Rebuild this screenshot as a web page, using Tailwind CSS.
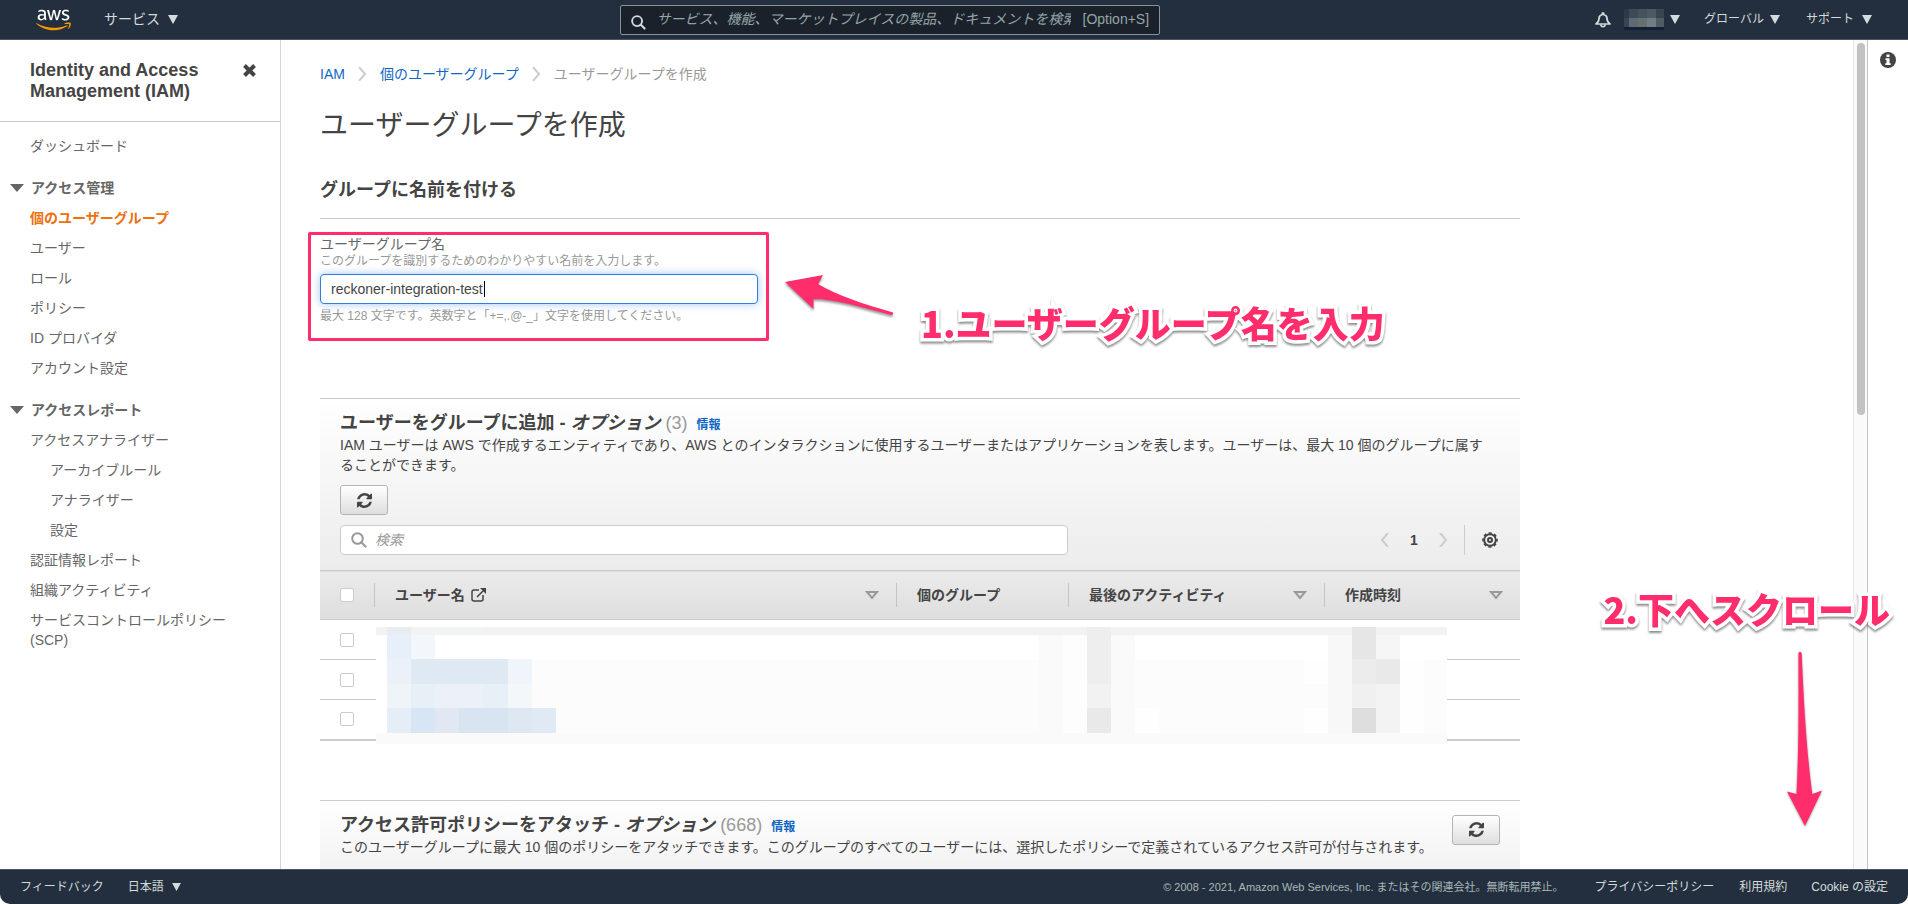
<!DOCTYPE html>
<html lang="ja">
<head>
<meta charset="utf-8">
<title>IAM</title>
<script src="https://cdn.jsdelivr.net/npm/@tailwindcss/browser@4"></script>
</head>
<body class="bg-white text-sm leading-5 text-[#444] font-['Liberation_Sans','Noto_Sans_CJK_JP',sans-serif]">
<svg class="hidden">
  <symbol id="refresh" viewBox="0 0 1536 1536"><path fill="currentColor" d="M1511 928q0 5-1 7-64 268-268 434.500T764 1536q-146 0-282.500-55T238 1324l-129 129q-19 19-45 19t-45-19-19-45V960q0-26 19-45t45-19h448q26 0 45 19t19 45-19 45l-137 137q71 66 161 102t187 36q134 0 250-65t186-179q11-17 53-117 8-23 30-23h192q13 0 22.500 9.500t9.500 22.500zm25-800v448q0 26-19 45t-45 19h-448q-26 0-45-19t-19-45 19-45l138-138Q969 256 768 256q-134 0-250 65T332 500q-11 17-53 117-8 23-30 23H50q-13 0-22.500-9.500T18 608v-7q65-268 270-434.500T768 0q146 0 284 55.500T1297 212l130-129q19-19 45-19t45 19 19 45z"/></symbol>
  <symbol id="down" viewBox="0 0 10 9"><path fill="currentColor" d="M0 0h10L5 9z"/></symbol>
  <symbol id="sort" viewBox="0 0 14 9"><path fill="none" stroke="#999" stroke-width="2" d="M2 1h10L7 7z"/></symbol>
  <symbol id="chev" viewBox="0 0 9 14"><path fill="none" stroke="#ccc" stroke-width="2" d="M1 0l6 7-6 7"/></symbol>
  <symbol id="glass" viewBox="0 0 16 16"><circle cx="6.500" cy="6.500" r="5.300" fill="none" stroke="currentColor" stroke-width="2"/><path stroke="currentColor" stroke-width="2.200" stroke-linecap="round" d="M10.500 10.500l4 4"/></symbol>
</svg>
<div class="relative flex h-screen flex-col overflow-hidden">

<header class="flex h-10 shrink-0 items-center border-b border-[#4b5563] bg-[#232f3e] pr-9 pl-9 text-[#d5dbdb]">
  <a href="#" aria-label="AWS" class="block">
    <svg class="h-[22px] w-[35px]" viewBox="0 0 304 182"><path fill="#fff" d="M86.400 66.400c0 3.700.4 6.700 1.100 8.900.8 2.200 1.800 4.600 3.200 7.200.5.800.7 1.600.7 2.300 0 1-.6 2-1.900 3l-6.300 4.200c-.9.600-1.800.9-2.600.9-1 0-2-.5-3-1.400-1.400-1.500-2.600-3.100-3.600-4.700-1-1.700-2-3.600-3.100-5.900-7.800 9.200-17.600 13.800-29.400 13.800-8.400 0-15.100-2.400-20-7.200-4.900-4.800-7.400-11.200-7.400-19.200 0-8.500 3-15.400 9.100-20.600 6.100-5.200 14.200-7.800 24.500-7.800 3.400 0 6.900.3 10.600.8 3.700.5 7.500 1.300 11.500 2.200v-7.300c0-7.600-1.600-12.900-4.700-16-3.200-3.100-8.600-4.600-16.300-4.600-3.500 0-7.100.4-10.800 1.300-3.700.9-7.300 2-10.800 3.400-1.600.7-2.800 1.100-3.500 1.300-.7.200-1.200.3-1.600.3-1.400 0-2.100-1-2.100-3.100v-4.900c0-1.600.2-2.800.7-3.500.5-.7 1.400-1.400 2.800-2.100 3.500-1.800 7.700-3.300 12.600-4.500 4.900-1.300 10.100-1.900 15.600-1.900 11.900 0 20.600 2.700 26.200 8.100 5.500 5.400 8.300 13.600 8.300 24.600v32.400zM45.800 81.600c3.300 0 6.700-.6 10.300-1.800 3.600-1.200 6.800-3.400 9.500-6.400 1.600-1.900 2.800-4 3.400-6.400.6-2.400 1-5.300 1-8.700v-4.200c-2.900-.7-6-1.300-9.200-1.700-3.200-.4-6.300-.6-9.400-.6-6.700 0-11.600 1.300-14.900 4-3.300 2.700-4.900 6.500-4.900 11.500 0 4.700 1.200 8.200 3.700 10.600 2.400 2.500 5.900 3.700 10.500 3.700zm80.300 10.800c-1.800 0-3-.3-3.800-1-.8-.6-1.500-2-2.100-3.900L96.700 10.200c-.6-2-.9-3.300-.9-4 0-1.600.8-2.500 2.400-2.500h9.800c1.900 0 3.200.3 3.900 1 .8.600 1.400 2 2 3.900l16.800 66.200 15.600-66.200c.5-2 1.100-3.300 1.900-3.900.8-.6 2.200-1 4-1h8c1.900 0 3.200.3 4 1 .8.600 1.500 2 1.900 3.900l15.800 67 17.300-67c.6-2 1.300-3.300 2-3.900.8-.6 2.100-1 3.900-1h9.300c1.600 0 2.500.8 2.500 2.500 0 .5-.1 1-.2 1.600-.1.600-.3 1.400-.7 2.500l-24.100 77.300c-.6 2-1.300 3.300-2.100 3.900-.8.600-2.100 1-3.800 1h-8.600c-1.900 0-3.200-.3-4-1-.8-.7-1.500-2-1.900-4L156 23l-15.400 64.400c-.5 2-1.100 3.300-1.900 4-.8.700-2.200 1-4 1zm128.500 2.700c-5.200 0-10.400-.6-15.400-1.800-5-1.200-8.900-2.500-11.500-4-1.600-.9-2.700-1.900-3.100-2.800-.4-.9-.6-1.900-.6-2.800v-5.100c0-2.100.8-3.100 2.300-3.100.6 0 1.200.1 1.800.3.600.2 1.500.6 2.500 1 3.400 1.500 7.100 2.700 11 3.500 4 .8 7.900 1.200 11.900 1.200 6.300 0 11.200-1.100 14.600-3.300 3.400-2.200 5.200-5.400 5.200-9.500 0-2.800-.9-5.100-2.700-7-1.800-1.900-5.200-3.600-10.100-5.200L246 52c-7.300-2.300-12.700-5.700-16-10.200-3.300-4.400-5-9.300-5-14.500 0-4.200.9-7.900 2.700-11.100 1.800-3.200 4.200-6 7.200-8.200 3-2.300 6.400-4 10.400-5.200 4-1.200 8.200-1.700 12.600-1.700 2.200 0 4.500.1 6.700.4 2.300.3 4.400.7 6.500 1.100 2 .5 3.900 1 5.700 1.600 1.800.6 3.200 1.200 4.200 1.800 1.400.8 2.400 1.600 3 2.500.6.800.9 1.900.9 3.300v4.700c0 2.100-.8 3.200-2.300 3.200-.8 0-2.100-.4-3.800-1.200-5.700-2.600-12.100-3.900-19.200-3.900-5.700 0-10.200.9-13.300 2.800-3.100 1.900-4.700 4.800-4.700 8.900 0 2.800 1 5.200 3 7.100 2 1.900 5.700 3.800 11 5.500l14.200 4.500c7.200 2.300 12.400 5.500 15.500 9.600 3.100 4.100 4.600 8.800 4.600 14 0 4.300-.9 8.200-2.600 11.600-1.800 3.400-4.200 6.400-7.300 8.800-3.100 2.500-6.800 4.300-11.100 5.600-4.500 1.400-9.200 2.100-14.300 2.100z"/><path fill="#f90" d="M273.500 143.700c-32.900 24.300-80.700 37.200-121.800 37.200-57.600 0-109.500-21.300-148.700-56.700-3.100-2.800-.3-6.600 3.400-4.400 42.400 24.600 94.700 39.500 148.800 39.500 36.500 0 76.600-7.600 113.500-23.200 5.500-2.500 10.200 3.600 4.800 7.600z"/><path fill="#f90" d="M287.200 128.100c-4.200-5.400-27.800-2.600-38.500-1.300-3.200.4-3.700-2.400-.8-4.500 18.800-13.200 49.700-9.400 53.300-5 3.600 4.500-1 35.400-18.600 50.200-2.700 2.300-5.300 1.100-4.100-1.900 4-9.900 12.900-32.200 8.700-37.500z"/></svg>
  </a>
  <button class="ml-[33px] flex items-center gap-2 pb-px">サービス<svg class="h-[9px] w-[10px]"><use href="#down"/></svg></button>
  <div class="flex flex-1 justify-center">
    <div class="ml-[6px] flex h-[30px] w-[540px] items-center rounded-xs border border-[#879596] bg-[#1a212b]">
      <svg class="mt-[6px] ml-[10px] h-[15px] w-[15px]"><use href="#glass"/></svg>
      <input aria-label="検索" placeholder="サービス、機能、マーケットプレイスの製品、ドキュメントを検索" class="ml-[11px] w-[414px] pb-px italic outline-none placeholder:text-[#95a5a6]">
      <span class="ml-3 pb-px text-[#95a5a6]">[Option+S]</span>
    </div>
  </div>
  <button aria-label="通知"><svg class="h-4 w-4" viewBox="0 0 16 16" fill="none" stroke="#d5dbdb" stroke-width="1.700"><path stroke-linejoin="round" d="M1 12h14c-2-1.500-3-3-3-5.500C12 4 10.500 3 8.700 2.500V1.200H7.300v1.300C5.500 3 4 4 4 6.500 4 9 3 10.500 1 12z"/><path d="M5.800 12.500c.2 3 4.200 3 4.400 0"/></svg></button>
  <button aria-label="アカウント" class="ml-[13px] flex items-center gap-[6px]">
    <svg class="h-[21px] w-10" viewBox="0 0 40 21" shape-rendering="crispEdges"><path fill="#2e3947" d="M0 0h14v9H0z"/><path fill="#3d4956" d="M5 0h9v9H5z"/><path fill="#46525e" d="M14 0h9v9h-9z"/><path fill="#4d5963" d="M23 0h9v9h-9z"/><path fill="#384451" d="M32 0h8v9h-8zM0 9h5v9H0z"/><path fill="#5e6972" d="M5 9h9v9H5z"/><path fill="#65706f" d="M14 9h9v9h-9z"/><path fill="#717d84" d="M23 9h9v9h-9z"/><path fill="#505c65" d="M32 9h8v9h-8z"/><path fill="#132036" d="M0 18h40v3H0z"/></svg>
    <svg class="h-[9px] w-[10px]"><use href="#down"/></svg>
  </button>
  <button class="ml-6 flex items-center gap-[6px] pb-px text-xs">グローバル<svg class="h-[9px] w-[10px]"><use href="#down"/></svg></button>
  <button class="ml-[26px] flex items-center gap-2 pb-px text-xs">サポート<svg class="h-[9px] w-[10px]"><use href="#down"/></svg></button>
</header>

<div class="flex min-h-0 flex-1">
  <aside class="w-[281px] shrink-0 border-r border-[#d5d5d5] text-[#666]">
    <div class="flex h-[82px] items-start justify-between border-b border-[#ccc] pt-5 pr-6 pl-[30px]">
      <h2 class="w-[180px] text-lg leading-[21px] font-bold text-[#444]">Identity and Access Management (IAM)</h2>
      <button aria-label="閉じる" class="mt-1"><svg class="h-[13px] w-[13px]" viewBox="0 0 13 13"><path stroke="#444" stroke-width="4" d="M1.500 1.500l10 10M11.500 1.500l-10 10"/></svg></button>
    </div>
    <nav class="flex flex-col gap-[22px] pt-[14px] pr-8 pl-[30px]">
      <a href="#">ダッシュボード</a>
      <div>
        <button class="-ml-5 flex items-center gap-[7px] font-bold"><svg class="h-2 w-[14px]" viewBox="0 0 14 8"><path fill="#666" d="M0 0h14L7 8z"/></svg>アクセス管理</button>
        <ul class="mt-[10px] flex flex-col gap-[10px]">
          <li><a href="#" class="font-bold text-[#ec7211]">個のユーザーグループ</a></li>
          <li><a href="#">ユーザー</a></li>
          <li><a href="#">ロール</a></li>
          <li><a href="#">ポリシー</a></li>
          <li><a href="#">ID プロバイダ</a></li>
          <li><a href="#">アカウント設定</a></li>
        </ul>
      </div>
      <div>
        <button class="-ml-5 flex items-center gap-[7px] font-bold"><svg class="h-2 w-[14px]" viewBox="0 0 14 8"><path fill="#666" d="M0 0h14L7 8z"/></svg>アクセスレポート</button>
        <ul class="mt-[10px] flex flex-col gap-[10px]">
          <li><a href="#">アクセスアナライザー</a></li>
          <li class="pl-5"><a href="#">アーカイブルール</a></li>
          <li class="pl-5"><a href="#">アナライザー</a></li>
          <li class="pl-5"><a href="#">設定</a></li>
          <li><a href="#">認証情報レポート</a></li>
          <li><a href="#">組織アクティビティ</a></li>
          <li><a href="#">サービスコントロールポリシー (SCP)</a></li>
        </ul>
      </div>
    </nav>
  </aside>

  <main class="min-w-0 flex-1 overflow-hidden pt-6 pr-8 pl-[39px]">
    <div class="max-w-[1200px]">
      <nav class="flex items-center gap-[13px] text-[#999]">
        <a href="#" class="text-[#0f66c3]">IAM</a>
        <svg class="h-[14px] w-[9px]"><use href="#chev"/></svg>
        <a href="#" class="text-[#0f66c3]">個のユーザーグループ</a>
        <svg class="h-[14px] w-[9px]"><use href="#chev"/></svg>
        <span>ユーザーグループを作成</span>
      </nav>
      <h1 class="mt-[22px] text-[28px] leading-10">ユーザーグループを作成</h1>
      <h2 class="mt-8 border-b border-[#ccc] pb-4 text-lg leading-6 font-bold">グループに名前を付ける</h2>

      <div class="relative pt-4">
        <label for="gname" class="block leading-[18px] text-[#666]">ユーザーグループ名</label>
        <p class="text-xs leading-4 text-[#999]">このグループを識別するためのわかりやすい名前を入力します。</p>
        <div class="relative mt-[5px] w-[438px]">
          <input id="gname" value="reckoner-integration-test" class="block h-[30px] w-full rounded-[4px] border border-[#2e7fdb] bg-white px-[10px] text-[#444] shadow-[0_0_8px_rgba(46,127,219,0.45)] outline-none">
          <span class="absolute top-[7px] left-[164px] h-4 w-px bg-black"></span>
        </div>
        <p class="mt-1 text-xs leading-4 text-[#999]">最大 128 文字です。英数字と「+=,.@-_」文字を使用してください。</p>
        <div class="pointer-events-none absolute top-[13px] -left-3 h-[109px] w-[461px] rounded-xs border-3 border-[#ff2d6b] shadow-[0_0_1px_rgba(0,0,0,0.3)]"></div>
        <svg class="absolute top-[50px] left-[460px] h-[54px] w-[122px] drop-shadow-[0_2px_1px_rgba(0,0,0,0.4)]" viewBox="0 0 122 54"><path fill="#ff2d6b" d="M5 13L43 6l-5 9c20 12 46 20 75 28.500.8 1-.5 2.500-2 2.500-30-8-56-16-77.500-16V40z"/></svg>
        <p class="absolute top-[79px] left-[601px] font-['Noto_Sans_CJK_JP',sans-serif] text-4xl leading-12 font-black whitespace-nowrap text-[#ff2d6b] drop-shadow-[0_2px_1px_rgba(0,0,0,0.45)] [-webkit-text-stroke:7px_white] [paint-order:stroke_fill]">1.ユーザーグループ名を入力</p>
      </div>

      <section class="relative mt-[74px] border-t border-[#ccc]">
        <div class="bg-linear-to-b from-white to-[#ececec] px-5 pt-[13px] pb-[15px]">
          <h2 class="text-lg leading-[23px] font-bold">ユーザーをグループに追加 - <em>オプション</em> <span class="font-normal text-[#999]">(3)</span> <a href="#" class="ml-1 text-xs text-[#0f66c3]">情報</a></h2>
          <p class="pr-3">IAM ユーザーは AWS で作成するエンティティであり、AWS とのインタラクションに使用するユーザーまたはアプリケーションを表します。ユーザーは、最大 10 個のグループに属することができます。</p>
          <button aria-label="更新" class="mt-[10px] flex h-[30px] w-12 items-center justify-center rounded-[3px] border border-[#b5b5b5] bg-linear-to-b from-white to-[#dedede]"><svg class="h-[15px] w-[15px]"><use href="#refresh"/></svg></button>
          <div class="mt-[10px] flex items-center">
            <div class="flex h-[30px] w-[728px] items-center rounded-[4px] border border-[#ccc] bg-white pl-[10px]">
              <svg class="h-4 w-4 text-[#999]"><use href="#glass"/></svg>
              <input aria-label="ユーザー検索" placeholder="検索" class="ml-2 flex-1 italic outline-none placeholder:text-[#999]">
            </div>
            <button aria-label="前へ" class="ml-auto"><svg class="h-[14px] w-[9px] rotate-180"><use href="#chev"/></svg></button>
            <span class="w-[50px] text-center font-bold">1</span>
            <button aria-label="次へ"><svg class="h-[14px] w-[9px]"><use href="#chev"/></svg></button>
            <span class="ml-4 h-[30px] w-px bg-[#ccc]"></span>
            <button aria-label="設定" class="mr-[2px] ml-[17px]"><svg class="h-4 w-4" viewBox="0 0 16 16" fill="none" stroke="#444"><circle cx="8" cy="8" r="5.800" stroke-width="1.900"/><circle cx="8" cy="8" r="7" stroke-width="1.700" stroke-dasharray="3 2.500" stroke-dashoffset="1.500"/><circle cx="8" cy="8" r="2" stroke-width="2"/></svg></button>
          </div>
        </div>
        <table class="w-full table-fixed border-collapse text-left">
          <colgroup><col class="w-[54px]"><col><col class="w-[172px]"><col class="w-[256px]"><col class="w-[196px]"></colgroup>
          <thead>
            <tr class="h-[49px] border-y border-[#ccc] bg-linear-to-b from-[#ebebeb] to-[#dedede]">
              <th class="pl-5"><input type="checkbox" aria-label="すべて選択" class="block h-[14px] w-[14px] appearance-none rounded-[2px] border border-[#ccc] bg-white"></th>
              <th><div class="flex h-6 items-center gap-[6px] border-l border-[#c4c4c4] pr-[17px] pl-5">ユーザー名<svg class="h-[14px] w-[15px]" viewBox="0 0 15 14" fill="none" stroke="#444" stroke-width="1.500"><path d="M8 2H3a2 2 0 0 0-2 2v7a2 2 0 0 0 2 2h7a2 2 0 0 0 2-2V7M6 9l7-7"/><path stroke="none" fill="#444" d="M9 0h6v6z"/></svg><svg class="ml-auto h-[9px] w-[14px]"><use href="#sort"/></svg></div></th>
              <th><div class="flex h-6 items-center border-l border-[#c4c4c4] pl-5">個のグループ</div></th>
              <th><div class="flex h-6 items-center border-l border-[#c4c4c4] pr-[17px] pl-5">最後のアクティビティ<svg class="ml-auto h-[9px] w-[14px]"><use href="#sort"/></svg></div></th>
              <th><div class="flex h-6 items-center border-l border-[#c4c4c4] pr-[17px] pl-5">作成時刻<svg class="ml-auto h-[9px] w-[14px]"><use href="#sort"/></svg></div></th>
            </tr>
          </thead>
          <tbody>
            <tr class="h-10 border-b border-[#ccc]"><td class="pl-5"><input type="checkbox" aria-label="ユーザー 1" class="block h-[14px] w-[14px] appearance-none rounded-[2px] border border-[#ccc] bg-white"></td><td colspan="4"></td></tr>
            <tr class="h-10 border-b border-[#ccc]"><td class="pl-5"><input type="checkbox" aria-label="ユーザー 2" class="block h-[14px] w-[14px] appearance-none rounded-[2px] border border-[#ccc] bg-white"></td><td colspan="4"></td></tr>
            <tr class="h-10 border-b-2 border-[#ccc]"><td class="pl-5"><input type="checkbox" aria-label="ユーザー 3" class="block h-[14px] w-[14px] appearance-none rounded-[2px] border border-[#ccc] bg-white"></td><td colspan="4"></td></tr>
          </tbody>
        </table>
        <svg class="absolute top-[228px] left-14 h-[117px] w-[1071px]" viewBox="0 0 1071 117" shape-rendering="crispEdges">
          <path fill="#fff" d="M0 0h1071v117H0z"/><path fill="#fcfcfc" d="M156 33h915v73H156z"/><path fill="#fafafa" d="M0 106h1071v11H0z"/><path fill="#f2f2f2" d="M0 0h1071v8H0z"/>
          <path fill="#e9ecf0" d="M11 0h24v8H11z"/><path fill="#e6effa" d="M11 8h24v24H11z"/><path fill="#f3f7fb" d="M35 8h24v24H35z"/><path fill="#f2f4f4" d="M35 0h72v8H35z"/>
          <path fill="#ebf0f9" d="M11 32h24v25H11z"/><path fill="#dfe9f3" d="M35 32h97v25H35z"/><path fill="#eff5fa" d="M132 32h24v25h-24z"/>
          <path fill="#eff4f9" d="M11 57h24v24H11z"/><path fill="#e8f0f7" d="M35 57h24v24H35z"/><path fill="#ecf0f9" d="M59 57h48v24H59z"/><path fill="#e8f0f7" d="M107 57h25v24h-25z"/><path fill="#f3f7fa" d="M132 57h24v24h-24z"/>
          <path fill="#e5eef6" d="M11 81h24v25H11z"/><path fill="#d8e5f4" d="M35 81h24v25H35z"/><path fill="#e1e8f4" d="M59 81h24v25H59z"/><path fill="#d8e4f0" d="M83 81h49v25H83z"/><path fill="#dde8f2" d="M132 81h24v25h-24z"/><path fill="#dfeaf5" d="M156 81h24v25h-24z"/>
          <path fill="#fafafa" d="M663 8h24v98h-24z"/><path fill="#fdfdfd" d="M687 8h24v98h-24z"/><path fill="#eee" d="M711 0h24v57h-24z"/><path fill="#f2f2f2" d="M711 57h24v24h-24z"/><path fill="#e9e9e9" d="M711 81h24v25h-24z"/><path fill="#fafafa" d="M735 8h24v98h-24z"/><path fill="#fefefe" d="M759 81h24v25h-24zM928 32h24v25h-24zM928 81h24v25h-24z"/>
          <path fill="#f8f8f8" d="M952 8h24v98h-24z"/><path fill="#e6e6e6" d="M976 0h24v32h-24z"/><path fill="#ececec" d="M976 32h24v25h-24z"/><path fill="#f0f0f0" d="M976 57h24v24h-24z"/><path fill="#dedede" d="M976 81h24v25h-24z"/><path fill="#f6f6f6" d="M1000 8h24v24h-24z"/><path fill="#e9e9e9" d="M1000 32h24v25h-24z"/><path fill="#f3f3f3" d="M1000 57h24v49h-24z"/><path fill="#fefefe" d="M1024 32h24v74h-24z"/>
        </svg>
      </section>

      <section class="mt-[59px] flex items-start border-t border-[#ccc] bg-linear-to-b from-white to-[#e6e6e6] px-5 pt-3 pb-20">
        <div class="flex-1">
          <h2 class="text-lg leading-6 font-bold">アクセス許可ポリシーをアタッチ - <em>オプション</em> <span class="font-normal text-[#999]">(668)</span> <a href="#" class="ml-1 text-xs text-[#0f66c3]">情報</a></h2>
          <p>このユーザーグループに最大 10 個のポリシーをアタッチできます。このグループのすべてのユーザーには、選択したポリシーで定義されているアクセス許可が付与されます。</p>
        </div>
        <button aria-label="更新" class="mt-[2px] flex h-[30px] w-12 shrink-0 items-center justify-center rounded-[3px] border border-[#b5b5b5] bg-linear-to-b from-white to-[#dedede]"><svg class="h-[15px] w-[15px]"><use href="#refresh"/></svg></button>
      </section>
    </div>
  </main>

  <div class="w-[15px] shrink-0 border-x border-l-[#e8e8e8] border-r-[#c4c4c4] bg-[#fafafa] px-[3px] pt-[3px]"><div class="h-[372px] w-2 rounded-full bg-[#c2c2c2]"></div></div>
  <div class="flex w-10 shrink-0 justify-center pt-3">
    <button aria-label="情報" class="h-4 w-4"><svg class="h-4 w-4" viewBox="0 0 16 16"><circle cx="8" cy="8" r="8" fill="#444"/><path fill="#fff" d="M6.500 2.500h3V5h-3zM5.500 6.200h4v5h1.200V13H5.300v-1.800h1.200V8h-1z"/></svg></button>
  </div>
</div>

<div class="bg-white">
<footer class="flex h-[35px] shrink-0 items-center rounded-b-[10px] border-t border-[#4b5563] bg-[#232f3e] px-5 text-xs text-[#d5dbdb]">
  <a href="#">フィードバック</a>
  <button class="ml-6 flex items-center gap-2">日本語<svg class="h-2 w-[9px]"><use href="#down"/></svg></button>
  <p class="ml-auto text-[11px] text-[#aab7b8]">© 2008 - 2021, Amazon Web Services, Inc. またはその関連会社。無断転用禁止。</p>
  <a href="#" class="ml-[31px]">プライバシーポリシー</a>
  <a href="#" class="ml-[25px]">利用規約</a>
  <a href="#" class="ml-6">Cookie の設定</a>
</footer>
</div>

<p class="absolute right-[18px] bottom-[272px] font-['Noto_Sans_CJK_JP',sans-serif] text-4xl leading-12 font-black whitespace-nowrap text-[#ff2d6b] drop-shadow-[0_2px_1px_rgba(0,0,0,0.45)] [-webkit-text-stroke:7px_white] [paint-order:stroke_fill]">2.下へスクロール</p>
<svg class="absolute right-[82px] bottom-[74px] h-[182px] w-11 drop-shadow-[0_1px_1px_rgba(0,0,0,0.4)]" viewBox="0 0 44 182"><path fill="#ff2d6b" d="M16.500 6c0-3 3-3 3.200 0 2.300 55 5.300 100 10.600 140L40 142.500 23 178 5 143.500l9.500 2.500c2.500-50 2-95 2-140z"/></svg>
</div>
</body>
</html>
